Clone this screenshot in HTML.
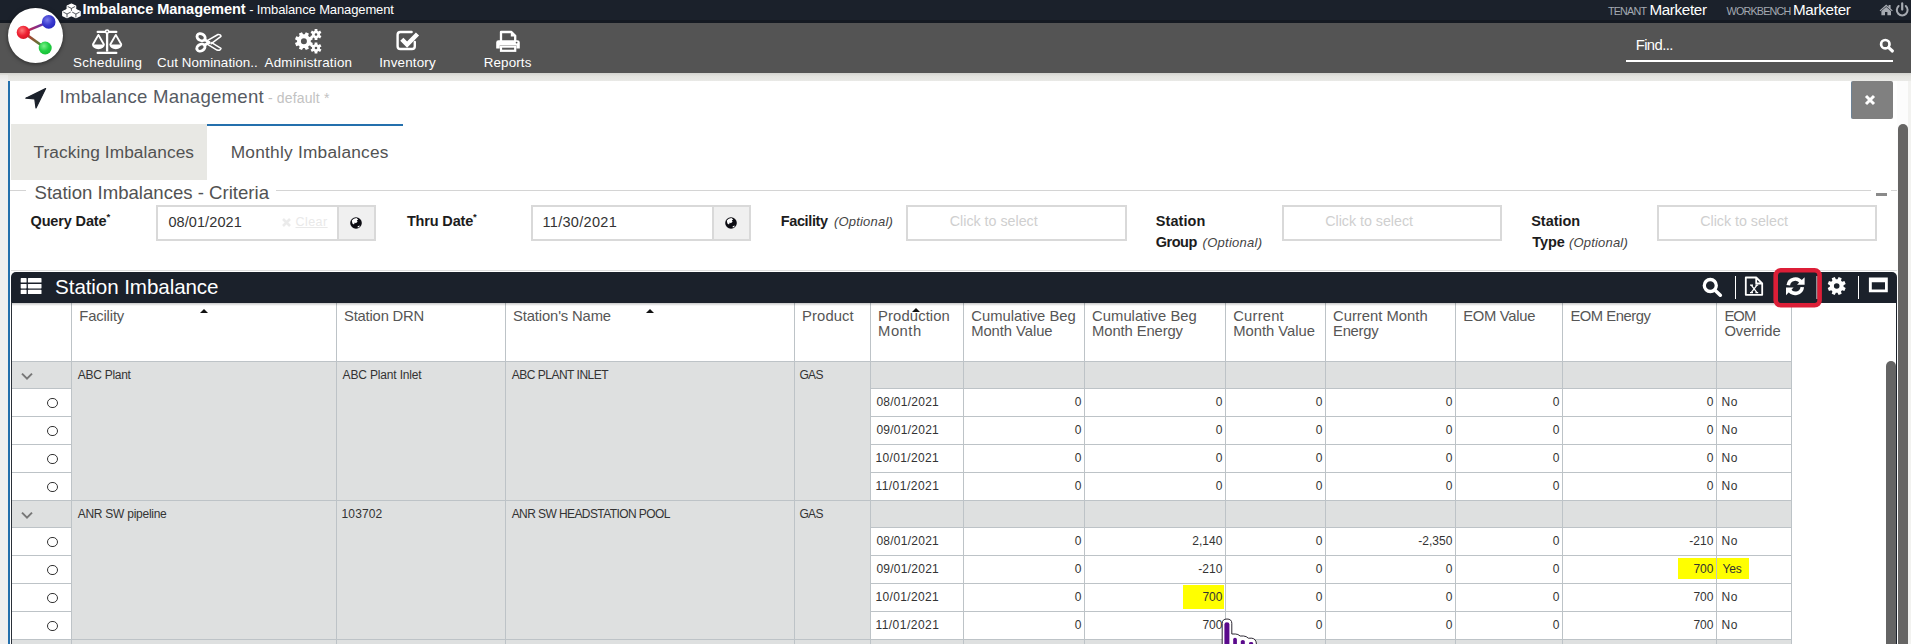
<!DOCTYPE html>
<html lang="en">
<head>
<meta charset="utf-8">
<title>Imbalance Management</title>
<style>
*{box-sizing:border-box;margin:0;padding:0}
html,body{width:1911px;height:644px;overflow:hidden;background:#f0f0f0;font-family:"Liberation Sans",sans-serif;color:#333}
.a{position:absolute}
.t{position:absolute;white-space:nowrap;line-height:1}
.u{text-decoration:underline}
.inp{border:2px solid #d9d9d9;background:#fff}
.btn{border:2px solid #d9d9d9;background:#f0f0f0}
.g{background:#dee0e0}
.c{font-size:12px;letter-spacing:.07px;color:#333}
.hl{height:1px;background:#bdc3c7}
.vl{width:1px;background:#bdc3c7}
.rd{width:10.2px;height:10.2px;border:1.6px solid #333;border-radius:50%}
.ar{width:0;height:0;border-left:4px solid transparent;border-right:4px solid transparent;border-bottom:4.2px solid #111}
</style>
</head>
<body>
<div class="a" style="left:0;top:0;width:1911px;height:22.5px;background:#1b212b"></div>
<div class="a" style="left:0;top:20px;width:1911px;height:2.5px;background:#151a22"></div>
<div class="a" style="left:0;top:22.5px;width:1911px;height:50px;background:#545454"></div>
<div class="a" style="left:0;top:72.5px;width:1911px;height:8.5px;background:linear-gradient(#d3d3cf,#e3e3df 40%,#e9e9e6)"></div>
<div class="a" style="left:0;top:74.5px;width:8px;height:6.5px;background:linear-gradient(#e6e6e4,#f0f0f0)"></div>
<div class="a" style="left:8px;top:81px;width:1889px;height:563px;background:#fff;border-left:2px solid #2470ad"></div>
<div class="a" style="left:8px;top:7.5px;width:55.4px;height:55.4px;border-radius:50%;background:#fff;box-shadow:0 1px 4px rgba(0,0,0,.5)"></div>
<div class="a" style="left:1625.8px;top:60px;width:267.4px;height:2.2px;background:#fff"></div>
<!-- title row -->
<svg class="a" style="left:24px;top:87px" width="24" height="24" viewBox="0 0 24 24"><path d="M21.6 1.6 L1.8 11.2 L10.8 12 L12 21 Z" fill="#1b212b" stroke="#1b212b" stroke-width="1.2" stroke-linejoin="round"/></svg>
<div class="a" style="left:1851px;top:81px;width:42px;height:38px;background:#808080;border-left:1px solid #6d8296;border-radius:2px"></div>
<svg class="a" style="left:1864px;top:94px" width="12" height="12" viewBox="0 0 12 12"><path d="M2 2 L10 10 M10 2 L2 10" stroke="#fff" stroke-width="3"/></svg>
<!-- tabs -->
<div class="a" style="left:11px;top:124px;width:196px;height:55.5px;background:#e8e8e4"></div>
<div class="a" style="left:207px;top:124px;width:196px;height:2px;background:#2470ad"></div>
<!-- fieldset -->
<div class="a" style="left:10px;top:190px;width:16px;height:1px;background:#d4d4d4"></div>
<div class="a" style="left:276px;top:190px;width:1594.5px;height:1px;background:#d4d4d4"></div>
<div class="a" style="left:1890.5px;top:190px;width:6px;height:1px;background:#d4d4d4"></div>
<div class="a" style="left:1875.5px;top:193px;width:11px;height:2.5px;background:#8a8a8a"></div>
<div class="a" style="left:11px;top:270px;width:1886px;height:1px;background:#dedede"></div>
<div class="a inp" style="left:156px;top:205px;width:183px;height:36px"></div>
<div class="a btn" style="left:337px;top:205px;width:39px;height:36px"></div>
<svg class="a" style="left:280.6px;top:216.8px" width="11" height="11" viewBox="0 0 11 11"><path d="M2 2 L9 9 M9 2 L2 9" stroke="#ebebeb" stroke-width="2.6"/></svg>
<div class="a inp" style="left:531px;top:205px;width:183px;height:36px"></div>
<div class="a btn" style="left:712px;top:205px;width:39px;height:36px"></div>
<div class="a inp" style="left:906px;top:205px;width:221px;height:36px"></div>
<div class="a inp" style="left:1282px;top:205px;width:220px;height:36px"></div>
<div class="a inp" style="left:1657px;top:205px;width:220px;height:36px"></div>
<!-- grid title bar -->
<div class="a" style="left:11px;top:272px;width:1886px;height:31px;background:#1b212b;border-radius:5px 5px 0 0"></div>

<!-- grid -->
<div class="a" style="left:11px;top:303px;width:1781px;height:341px;background:#fff"></div>
<div class="a" style="left:1183px;top:585px;width:41px;height:24px;background:#ffff00"></div>
<div class="a" style="left:1678px;top:558px;width:71px;height:21px;background:#ffff00"></div>
<div class="a g" style="left:11px;top:361px;width:1780px;height:27px"></div>
<div class="a g" style="left:71px;top:388px;width:799px;height:112px"></div>
<svg class="a" style="left:21px;top:372px" width="12" height="9" viewBox="0 0 12 9"><path d="M1 1.6 L6 6.6 L11 1.6" fill="none" stroke="#777" stroke-width="2"/></svg>
<div class="a rd" style="left:47.4px;top:397.5px"></div>
<div class="t c" style="right:829.4px;top:395.77px">0</div>
<div class="t c" style="right:688.4px;top:395.77px">0</div>
<div class="t c" style="right:588.4px;top:395.77px">0</div>
<div class="t c" style="right:458.4px;top:395.77px">0</div>
<div class="t c" style="right:351.4px;top:395.77px">0</div>
<div class="t c" style="right:197.4px;top:395.77px">0</div>
<div class="a rd" style="left:47.4px;top:425.5px"></div>
<div class="t c" style="right:829.4px;top:423.77px">0</div>
<div class="t c" style="right:688.4px;top:423.77px">0</div>
<div class="t c" style="right:588.4px;top:423.77px">0</div>
<div class="t c" style="right:458.4px;top:423.77px">0</div>
<div class="t c" style="right:351.4px;top:423.77px">0</div>
<div class="t c" style="right:197.4px;top:423.77px">0</div>
<div class="a rd" style="left:47.4px;top:453.5px"></div>
<div class="t c" style="right:829.4px;top:451.77px">0</div>
<div class="t c" style="right:688.4px;top:451.77px">0</div>
<div class="t c" style="right:588.4px;top:451.77px">0</div>
<div class="t c" style="right:458.4px;top:451.77px">0</div>
<div class="t c" style="right:351.4px;top:451.77px">0</div>
<div class="t c" style="right:197.4px;top:451.77px">0</div>
<div class="a rd" style="left:47.4px;top:481.5px"></div>
<div class="t c" style="right:829.4px;top:479.77px">0</div>
<div class="t c" style="right:688.4px;top:479.77px">0</div>
<div class="t c" style="right:588.4px;top:479.77px">0</div>
<div class="t c" style="right:458.4px;top:479.77px">0</div>
<div class="t c" style="right:351.4px;top:479.77px">0</div>
<div class="t c" style="right:197.4px;top:479.77px">0</div>
<div class="a g" style="left:11px;top:500px;width:1780px;height:27px"></div>
<div class="a g" style="left:71px;top:527px;width:799px;height:112px"></div>
<svg class="a" style="left:21px;top:511px" width="12" height="9" viewBox="0 0 12 9"><path d="M1 1.6 L6 6.6 L11 1.6" fill="none" stroke="#777" stroke-width="2"/></svg>
<div class="a rd" style="left:47.4px;top:536.5px"></div>
<div class="t c" style="right:829.4px;top:534.77px">0</div>
<div class="t c" style="right:688.4px;top:534.77px">2,140</div>
<div class="t c" style="right:588.4px;top:534.77px">0</div>
<div class="t c" style="right:458.4px;top:534.77px">-2,350</div>
<div class="t c" style="right:351.4px;top:534.77px">0</div>
<div class="t c" style="right:197.4px;top:534.77px">-210</div>
<div class="a rd" style="left:47.4px;top:564.5px"></div>
<div class="t c" style="right:829.4px;top:562.77px">0</div>
<div class="t c" style="right:688.4px;top:562.77px">-210</div>
<div class="t c" style="right:588.4px;top:562.77px">0</div>
<div class="t c" style="right:458.4px;top:562.77px">0</div>
<div class="t c" style="right:351.4px;top:562.77px">0</div>
<div class="t c" style="right:197.4px;top:562.77px">700</div>
<div class="a rd" style="left:47.4px;top:592.5px"></div>
<div class="t c" style="right:829.4px;top:590.77px">0</div>
<div class="t c" style="right:688.4px;top:590.77px">700</div>
<div class="t c" style="right:588.4px;top:590.77px">0</div>
<div class="t c" style="right:458.4px;top:590.77px">0</div>
<div class="t c" style="right:351.4px;top:590.77px">0</div>
<div class="t c" style="right:197.4px;top:590.77px">700</div>
<div class="a rd" style="left:47.4px;top:620.5px"></div>
<div class="t c" style="right:829.4px;top:618.77px">0</div>
<div class="t c" style="right:688.4px;top:618.77px">700</div>
<div class="t c" style="right:588.4px;top:618.77px">0</div>
<div class="t c" style="right:458.4px;top:618.77px">0</div>
<div class="t c" style="right:351.4px;top:618.77px">0</div>
<div class="t c" style="right:197.4px;top:618.77px">700</div>
<div class="a g" style="left:11px;top:639px;width:1780px;height:5px"></div>
<div class="a hl" style="left:11px;top:361px;width:1780px"></div>
<div class="a hl" style="left:11px;top:388px;width:60px"></div>
<div class="a hl" style="left:870px;top:388px;width:921px"></div>
<div class="a hl" style="left:11px;top:416px;width:60px"></div>
<div class="a hl" style="left:870px;top:416px;width:921px"></div>
<div class="a hl" style="left:11px;top:444px;width:60px"></div>
<div class="a hl" style="left:870px;top:444px;width:921px"></div>
<div class="a hl" style="left:11px;top:472px;width:60px"></div>
<div class="a hl" style="left:870px;top:472px;width:921px"></div>
<div class="a hl" style="left:11px;top:500px;width:1780px"></div>
<div class="a hl" style="left:11px;top:527px;width:60px"></div>
<div class="a hl" style="left:870px;top:527px;width:921px"></div>
<div class="a hl" style="left:11px;top:555px;width:60px"></div>
<div class="a hl" style="left:870px;top:555px;width:921px"></div>
<div class="a hl" style="left:11px;top:583px;width:60px"></div>
<div class="a hl" style="left:870px;top:583px;width:921px"></div>
<div class="a hl" style="left:11px;top:611px;width:60px"></div>
<div class="a hl" style="left:870px;top:611px;width:921px"></div>
<div class="a hl" style="left:11px;top:639px;width:1780px"></div>
<div class="a vl" style="left:71px;top:303px;height:341px"></div>
<div class="a vl" style="left:336px;top:303px;height:341px"></div>
<div class="a vl" style="left:505px;top:303px;height:341px"></div>
<div class="a vl" style="left:794px;top:303px;height:341px"></div>
<div class="a vl" style="left:870px;top:303px;height:341px"></div>
<div class="a vl" style="left:963px;top:303px;height:341px"></div>
<div class="a vl" style="left:1084px;top:303px;height:341px"></div>
<div class="a vl" style="left:1225px;top:303px;height:341px"></div>
<div class="a vl" style="left:1325px;top:303px;height:341px"></div>
<div class="a vl" style="left:1455px;top:303px;height:341px"></div>
<div class="a vl" style="left:1562px;top:303px;height:341px"></div>
<div class="a vl" style="left:1716px;top:303px;height:341px"></div>
<div class="a vl" style="left:1791px;top:303px;height:341px"></div>
<div class="a" style="left:11px;top:302px;width:1px;height:342px;background:#2a3038"></div>
<div class="a" style="left:12px;top:303px;width:1779px;height:3px;background:linear-gradient(rgba(0,0,0,.22),rgba(0,0,0,0))"></div>
<div class="a ar" style="left:200.1px;top:309.1px"></div>
<div class="a ar" style="left:646px;top:309.1px"></div>
<div class="a ar" style="left:912px;top:308.4px"></div>
<!-- scrollbars -->
<div class="a" style="left:1897px;top:81px;width:14px;height:563px;background:#fcfcfc"></div>
<div class="a" style="left:1908px;top:81px;width:3px;height:563px;background:#f2f2f0"></div>
<div class="a" style="left:1898.1px;top:124px;width:9.9px;height:540px;background:#666564;border-radius:5px"></div>
<div class="a" style="left:1885px;top:303px;width:11px;height:341px;background:#fff"></div>
<div class="a" style="left:1896px;top:303px;width:1px;height:341px;background:#1b212b"></div>
<div class="a" style="left:1886.2px;top:361px;width:9.8px;height:300px;background:#646464;border-radius:5px"></div>

<!-- text -->
<div class="t" style="left:82.5px;top:1.96px;font-size:14.6px;color:#fff;letter-spacing:-0.079px;font-weight:bold">Imbalance Management</div>
<div class="t" style="left:249.2px;top:3.47px;font-size:13px;color:#fff;letter-spacing:-0.129px">- Imbalance Management</div>
<div class="t" style="left:1607.9px;top:5.77px;font-size:10.8px;color:#a3a9b2;letter-spacing:-0.82px">TENANT</div>
<div class="t" style="left:1649.4px;top:2.36px;font-size:15.2px;color:#fff;letter-spacing:-0.329px">Marketer</div>
<div class="t" style="left:1726.5px;top:5.77px;font-size:10.8px;color:#a3a9b2;letter-spacing:-0.812px">WORKBENCH</div>
<div class="t" style="left:1793px;top:2.36px;font-size:15.2px;color:#fff;letter-spacing:-0.286px">Marketer</div>
<div class="t" style="left:73px;top:56.47px;font-size:13.4px;color:#fff;letter-spacing:0.311px">Scheduling</div>
<div class="t" style="left:156.9px;top:56.47px;font-size:13.4px;color:#fff;letter-spacing:0.08px">Cut Nomination..</div>
<div class="t" style="left:264.6px;top:56.47px;font-size:13.4px;color:#fff;letter-spacing:0.2px">Administration</div>
<div class="t" style="left:379.2px;top:56.47px;font-size:13.4px;color:#fff;letter-spacing:0.175px">Inventory</div>
<div class="t" style="left:483.7px;top:56.47px;font-size:13.4px;color:#fff;letter-spacing:0.133px">Reports</div>
<div class="t" style="left:1635.7px;top:38.16px;font-size:14.8px;color:#fff;letter-spacing:-0.583px">Find...</div>
<div class="t" style="left:59.6px;top:88.05px;font-size:18.6px;color:#565b63;letter-spacing:0.242px">Imbalance Management</div>
<div class="t" style="left:267.9px;top:91.17px;font-size:14px;color:#c2c2c2;letter-spacing:0.16px">- default *</div>
<div class="t" style="left:33.5px;top:143.71px;font-size:17.3px;color:#525252;letter-spacing:0.094px">Tracking Imbalances</div>
<div class="t" style="left:230.7px;top:143.71px;font-size:17.3px;color:#525252;letter-spacing:0.241px">Monthly Imbalances</div>
<div class="t" style="left:34.5px;top:184.25px;font-size:18.6px;color:#525252;letter-spacing:-0.004px">Station Imbalances - Criteria</div>
<div class="t" style="left:30.5px;top:213.81px;font-size:14.5px;color:#1c1c1c;letter-spacing:-0.144px;font-weight:bold">Query Date</div>
<div class="t" style="left:106.6px;top:211.73px;font-size:9.5px;color:#1c1c1c;font-weight:bold">*</div>
<div class="t" style="left:168.4px;top:214.51px;font-size:14.5px;color:#333;letter-spacing:0.089px">08/01/2021</div>
<div class="t u" style="left:295.5px;top:215.92px;font-size:12.5px;color:#e9e9e9;letter-spacing:0.45px">Clear</div>
<div class="t" style="left:406.9px;top:213.81px;font-size:14.5px;color:#1c1c1c;letter-spacing:-0.162px;font-weight:bold">Thru Date</div>
<div class="t" style="left:473px;top:211.73px;font-size:9.5px;color:#1c1c1c;font-weight:bold">*</div>
<div class="t" style="left:542.5px;top:214.51px;font-size:14.5px;color:#333;letter-spacing:0.3px">11/30/2021</div>
<div class="t" style="left:780.7px;top:213.81px;font-size:14.5px;color:#1c1c1c;letter-spacing:-0.357px;font-weight:bold">Facility</div>
<div class="t" style="left:833.9px;top:215.07px;font-size:13px;color:#444;letter-spacing:0.211px;font-style:italic">(Optional)</div>
<div class="t" style="left:949.8px;top:213.61px;font-size:14.3px;color:#cfcfcf;letter-spacing:-0.021px">Click to select</div>
<div class="t" style="left:1155.7px;top:213.81px;font-size:14.5px;color:#1c1c1c;letter-spacing:0.1px;font-weight:bold">Station</div>
<div class="t" style="left:1155.7px;top:234.91px;font-size:14.5px;color:#1c1c1c;letter-spacing:-0.45px;font-weight:bold">Group</div>
<div class="t" style="left:1202.6px;top:236.07px;font-size:13px;color:#444;letter-spacing:0.256px;font-style:italic">(Optional)</div>
<div class="t" style="left:1325.3px;top:213.61px;font-size:14.3px;color:#cfcfcf;letter-spacing:-0.036px">Click to select</div>
<div class="t" style="left:1531.2px;top:213.81px;font-size:14.5px;color:#1c1c1c;letter-spacing:-0.017px;font-weight:bold">Station</div>
<div class="t" style="left:1532.2px;top:234.91px;font-size:14.5px;color:#1c1c1c;letter-spacing:-0.067px;font-weight:bold">Type</div>
<div class="t" style="left:1569px;top:236.07px;font-size:13px;color:#444;letter-spacing:0.189px;font-style:italic">(Optional)</div>
<div class="t" style="left:1700.3px;top:213.61px;font-size:14.3px;color:#cfcfcf;letter-spacing:-0.036px">Click to select</div>
<div class="t" style="left:55.1px;top:276.95px;font-size:20.6px;color:#fff;letter-spacing:-0.088px">Station Imbalance</div>
<div class="t" style="left:79.3px;top:308.86px;font-size:14.8px;color:#565656;letter-spacing:-0.157px">Facility</div>
<div class="t" style="left:344px;top:308.86px;font-size:14.8px;color:#565656;letter-spacing:-0.2px">Station DRN</div>
<div class="t" style="left:513.1px;top:308.86px;font-size:14.8px;color:#565656;letter-spacing:-0.146px">Station's Name</div>
<div class="t" style="left:802.1px;top:308.86px;font-size:14.8px;color:#565656;letter-spacing:0.1px">Product</div>
<div class="t" style="left:878.1px;top:308.86px;font-size:14.8px;color:#565656;letter-spacing:0.111px">Production</div>
<div class="t" style="left:878.1px;top:323.86px;font-size:14.8px;color:#565656;letter-spacing:0.475px">Month</div>
<div class="t" style="left:971.2px;top:308.86px;font-size:14.8px;color:#565656;letter-spacing:0.015px">Cumulative Beg</div>
<div class="t" style="left:971.2px;top:323.86px;font-size:14.8px;color:#565656;letter-spacing:-0.06px">Month Value</div>
<div class="t" style="left:1092.1px;top:308.86px;font-size:14.8px;color:#565656;letter-spacing:0.015px">Cumulative Beg</div>
<div class="t" style="left:1092.1px;top:323.86px;font-size:14.8px;color:#565656;letter-spacing:-0.109px">Month Energy</div>
<div class="t" style="left:1233.2px;top:308.86px;font-size:14.8px;color:#565656;letter-spacing:0.2px">Current</div>
<div class="t" style="left:1233.2px;top:323.86px;font-size:14.8px;color:#565656;letter-spacing:-0.03px">Month Value</div>
<div class="t" style="left:1333px;top:308.86px;font-size:14.8px;color:#565656;letter-spacing:0.008px">Current Month</div>
<div class="t" style="left:1333px;top:323.86px;font-size:14.8px;color:#565656;letter-spacing:-0.24px">Energy</div>
<div class="t" style="left:1463.2px;top:308.86px;font-size:14.8px;color:#565656;letter-spacing:-0.287px">EOM Value</div>
<div class="t" style="left:1570.4px;top:308.86px;font-size:14.8px;color:#565656;letter-spacing:-0.478px">EOM Energy</div>
<div class="t" style="left:1724.4px;top:308.86px;font-size:14.8px;color:#565656;letter-spacing:-0.9px">EOM</div>
<div class="t" style="left:1724.4px;top:323.86px;font-size:14.8px;color:#565656;letter-spacing:-0.057px">Override</div>
<div class="t" style="left:77.7px;top:368.57px;font-size:12px;color:#333;letter-spacing:-0.263px">ABC Plant</div>
<div class="t" style="left:342.6px;top:368.57px;font-size:12px;color:#333;letter-spacing:-0.164px">ABC Plant Inlet</div>
<div class="t" style="left:511.7px;top:368.57px;font-size:12px;color:#333;letter-spacing:-0.493px">ABC PLANT INLET</div>
<div class="t" style="left:799.4px;top:368.57px;font-size:12px;color:#333;letter-spacing:-0.6px">GAS</div>
<div class="t" style="left:876.4px;top:395.77px;font-size:12px;color:#333;letter-spacing:0.256px">08/01/2021</div>
<div class="t" style="left:1721.4px;top:395.77px;font-size:12px;color:#333;letter-spacing:0.8px">No</div>
<div class="t" style="left:876.4px;top:423.77px;font-size:12px;color:#333;letter-spacing:0.256px">09/01/2021</div>
<div class="t" style="left:1721.4px;top:423.77px;font-size:12px;color:#333;letter-spacing:0.8px">No</div>
<div class="t" style="left:875.4px;top:451.77px;font-size:12px;color:#333;letter-spacing:0.367px">10/01/2021</div>
<div class="t" style="left:1721.4px;top:451.77px;font-size:12px;color:#333;letter-spacing:0.8px">No</div>
<div class="t" style="left:875.4px;top:479.77px;font-size:12px;color:#333;letter-spacing:0.478px">11/01/2021</div>
<div class="t" style="left:1721.4px;top:479.77px;font-size:12px;color:#333;letter-spacing:0.8px">No</div>
<div class="t" style="left:77.7px;top:507.57px;font-size:12px;color:#333;letter-spacing:-0.257px">ANR SW pipeline</div>
<div class="t" style="left:341.6px;top:507.57px;font-size:12px;color:#333;letter-spacing:0.1px">103702</div>
<div class="t" style="left:511.7px;top:507.57px;font-size:12px;color:#333;letter-spacing:-0.586px">ANR SW HEADSTATION POOL</div>
<div class="t" style="left:799.4px;top:507.57px;font-size:12px;color:#333;letter-spacing:-0.6px">GAS</div>
<div class="t" style="left:876.4px;top:534.77px;font-size:12px;color:#333;letter-spacing:0.256px">08/01/2021</div>
<div class="t" style="left:1721.4px;top:534.77px;font-size:12px;color:#333;letter-spacing:0.8px">No</div>
<div class="t" style="left:876.4px;top:562.77px;font-size:12px;color:#333;letter-spacing:0.256px">09/01/2021</div>
<div class="t" style="left:1722.4px;top:562.77px;font-size:12px;color:#333;letter-spacing:-0.1px">Yes</div>
<div class="t" style="left:875.4px;top:590.77px;font-size:12px;color:#333;letter-spacing:0.367px">10/01/2021</div>
<div class="t" style="left:1721.4px;top:590.77px;font-size:12px;color:#333;letter-spacing:0.8px">No</div>
<div class="t" style="left:875.4px;top:618.77px;font-size:12px;color:#333;letter-spacing:0.478px">11/01/2021</div>
<div class="t" style="left:1721.4px;top:618.77px;font-size:12px;color:#333;letter-spacing:0.8px">No</div>
<!-- icons -->
<svg class="a" style="left:7px;top:7px" width="57" height="57" viewBox="7 7 57 57">
<defs>
<radialGradient id="rgR" cx="40%" cy="35%" r="65%"><stop offset="0" stop-color="#ff7a7a"/><stop offset=".6" stop-color="#ee2233"/><stop offset="1" stop-color="#d81525"/></radialGradient>
<radialGradient id="rgB" cx="40%" cy="35%" r="65%"><stop offset="0" stop-color="#7b7bea"/><stop offset=".6" stop-color="#3a3ad0"/><stop offset="1" stop-color="#2a2ac0"/></radialGradient>
<radialGradient id="rgG" cx="40%" cy="35%" r="65%"><stop offset="0" stop-color="#7af08a"/><stop offset=".6" stop-color="#22d044"/><stop offset="1" stop-color="#18c038"/></radialGradient>
<linearGradient id="lgA" x1="23" y1="32" x2="49" y2="22" gradientUnits="userSpaceOnUse"><stop offset="0" stop-color="#e02030"/><stop offset="1" stop-color="#3a3ad0"/></linearGradient>
<linearGradient id="lgB" x1="23" y1="32" x2="45" y2="48" gradientUnits="userSpaceOnUse"><stop offset="0" stop-color="#e02030"/><stop offset="1" stop-color="#2a9a3a"/></linearGradient>
</defs>
<line x1="23.3" y1="32.4" x2="48.7" y2="21.9" stroke="url(#lgA)" stroke-width="2.6"/>
<line x1="23.3" y1="32.4" x2="45.2" y2="48" stroke="url(#lgB)" stroke-width="2.6"/>
<circle cx="23.3" cy="32.4" r="6.6" fill="url(#rgR)"/>
<circle cx="48.7" cy="21.9" r="6.8" fill="url(#rgB)"/>
<circle cx="45.2" cy="48" r="6.5" fill="url(#rgG)"/>
</svg>
<svg class="a" style="left:61px;top:2px" width="21" height="18" viewBox="61 2 21 18"><path d="M71.4 4.0 L75.7 6.0 L71.4 8.0 L67.10000000000001 6.0 Z M67.10000000000001 6.0 L71.4 8.0 L71.4 12.2 L67.10000000000001 10.2 Z M75.7 6.0 L71.4 8.0 L71.4 12.2 L75.7 10.2 Z" fill="#fff" stroke="#fff" stroke-width="1.1" stroke-linejoin="round"/><path d="M67.7 6.5 L71.4 8.4 L75.10000000000001 6.5 M71.4 8.4 V11.899999999999999" fill="none" stroke="#1b212b" stroke-width=".75"/><path d="M67.0 9.6 L71.3 11.6 L67.0 13.6 L62.7 11.6 Z M62.7 11.6 L67.0 13.6 L67.0 17.8 L62.7 15.8 Z M71.3 11.6 L67.0 13.6 L67.0 17.8 L71.3 15.8 Z" fill="#fff" stroke="#fff" stroke-width="1.1" stroke-linejoin="round"/><path d="M63.300000000000004 12.1 L67.0 14.0 L70.7 12.1 M67.0 14.0 V17.5" fill="none" stroke="#1b212b" stroke-width=".75"/><path d="M75.9 9.6 L80.2 11.6 L75.9 13.6 L71.60000000000001 11.6 Z M71.60000000000001 11.6 L75.9 13.6 L75.9 17.8 L71.60000000000001 15.8 Z M80.2 11.6 L75.9 13.6 L75.9 17.8 L80.2 15.8 Z" fill="#fff" stroke="#fff" stroke-width="1.1" stroke-linejoin="round"/><path d="M72.2 12.1 L75.9 14.0 L79.60000000000001 12.1 M75.9 14.0 V17.5" fill="none" stroke="#1b212b" stroke-width=".75"/></svg>
<svg class="a" style="left:90px;top:28px" width="34" height="28" viewBox="90 28 34 28">
<g fill="none" stroke="#fff" stroke-width="1.9" stroke-linejoin="round" stroke-linecap="round">
<path d="M97.6 31.9 H116.4" stroke-width="2.1"/>
<path d="M107.1 33 V51.6" stroke-width="2.3" stroke-linecap="butt"/>
<path d="M97.6 52.9 H116.4" stroke-width="2.1"/>
<path d="M93 44.3 L98.4 34.9 L103.8 44.3"/>
<path d="M110.4 44.3 L115.8 34.9 L121.2 44.3"/>
</g>
<circle cx="107.1" cy="31.6" r="2.4" fill="#fff"/><circle cx="107.1" cy="31.6" r=".8" fill="#545454"/>
<path d="M92 44.4 H104.8 A6.4 4.8 0 0 1 92 44.4 Z" fill="#fff"/>
<path d="M109.4 44.4 H122.2 A6.4 4.8 0 0 1 109.4 44.4 Z" fill="#fff"/>
</svg>
<svg class="a" style="left:193px;top:30px" width="31" height="25" viewBox="193 30 31 25">
<g fill="none" stroke="#fff" stroke-linejoin="round">
<ellipse cx="201.1" cy="37.2" rx="4.3" ry="3.3" transform="rotate(28 201.1 37.2)" stroke-width="2.8"/>
<ellipse cx="200.9" cy="47.6" rx="4.3" ry="3.3" transform="rotate(-28 200.9 47.6)" stroke-width="2.8"/>
<path d="M206.8 40.8 L218 34.5 Q220.8 34.2 221 36.4 L210.6 44.2" stroke-width="1.5"/>
<path d="M207.2 44.2 L217 50.1 Q220.6 50.8 221 48.4 L211.2 42.3" stroke-width="1.5"/>
<path d="M204.6 39.6 L209 42.4 L204.6 45.2" stroke-width="2.8"/>
</g><circle cx="209" cy="42.4" r="1.5" fill="#fff"/></svg>
<svg class="a" style="left:292px;top:27px" width="32" height="28" viewBox="292 27 32 28"><path fill-rule="evenodd" fill="#fff" d="M310.75 42.01 L312.80 43.12 L311.54 46.14 L309.32 45.47 L308.17 46.62 L308.84 48.84 L305.82 50.10 L304.71 48.05 L303.09 48.05 L301.98 50.10 L298.96 48.84 L299.63 46.62 L298.48 45.47 L296.26 46.14 L295.00 43.12 L297.05 42.01 L297.05 40.39 L295.00 39.28 L296.26 36.26 L298.48 36.93 L299.63 35.78 L298.96 33.56 L301.98 32.30 L303.09 34.35 L304.71 34.35 L305.82 32.30 L308.84 33.56 L308.17 35.78 L309.32 36.93 L311.54 36.26 L312.80 39.28 L310.75 40.39 Z M306.90 41.20 A3.0 3.0 0 1 0 300.90 41.20 A3.0 3.0 0 1 0 306.90 41.20 Z"/><path fill-rule="evenodd" fill="#fff" d="M319.95 35.13 L321.47 36.09 L320.11 38.45 L318.52 37.61 L317.43 38.23 L317.36 40.04 L314.64 40.04 L314.57 38.23 L313.48 37.61 L311.89 38.45 L310.53 36.09 L312.05 35.13 L312.05 33.87 L310.53 32.91 L311.89 30.55 L313.48 31.39 L314.57 30.77 L314.64 28.96 L317.36 28.96 L317.43 30.77 L318.52 31.39 L320.11 30.55 L321.47 32.91 L319.95 33.87 Z M317.30 34.50 A1.3 1.3 0 1 0 314.70 34.50 A1.3 1.3 0 1 0 317.30 34.50 Z"/><path fill-rule="evenodd" fill="#fff" d="M319.95 48.63 L321.47 49.59 L320.11 51.95 L318.52 51.11 L317.43 51.73 L317.36 53.54 L314.64 53.54 L314.57 51.73 L313.48 51.11 L311.89 51.95 L310.53 49.59 L312.05 48.63 L312.05 47.37 L310.53 46.41 L311.89 44.05 L313.48 44.89 L314.57 44.27 L314.64 42.46 L317.36 42.46 L317.43 44.27 L318.52 44.89 L320.11 44.05 L321.47 46.41 L319.95 47.37 Z M317.30 48.00 A1.3 1.3 0 1 0 314.70 48.00 A1.3 1.3 0 1 0 317.30 48.00 Z"/></svg>
<svg class="a" style="left:394px;top:28px" width="28" height="25" viewBox="394 28 28 25">
<path d="M411.6 32 H400.4 Q397.6 32 397.6 34.8 V46.2 Q397.6 49 400.4 49 H412 Q414.8 49 414.8 46.2 V42" fill="none" stroke="#fff" stroke-width="2.4" stroke-linecap="round"/>
<path d="M401.8 39.2 L407.1 44.6 L417.5 34" fill="none" stroke="#fff" stroke-width="4.4" stroke-linejoin="miter"/>
</svg>
<svg class="a" style="left:494px;top:28px" width="28" height="26" viewBox="494 28 28 26">
<path d="M501 41 V32 H511.4 L515.2 35.8 V41" fill="none" stroke="#fff" stroke-width="2.3" stroke-linejoin="round"/>
<path d="M510.8 32 V36.4 H515.2 Z" fill="#fff"/>
<path d="M496.2 48.4 V42.6 Q496.2 40.3 498.5 40.3 H517.5 Q519.8 40.3 519.8 42.6 V48.4 H516.4 V45.2 H499.8 V48.4 Z" fill="#fff"/>
<rect x="501" y="46.6" width="14.2" height="4.2" fill="none" stroke="#fff" stroke-width="2.2"/>
<circle cx="516.6" cy="42.6" r=".9" fill="#545454"/>
</svg>
<svg class="a" style="left:1878px;top:2px" width="33" height="18" viewBox="1878 2 33 18">
<path d="M1879.6 10.4 L1886.2 4.6 L1888.6 6.7 V5 H1890.6 V8.5 L1892.8 10.4 L1892 11.3 L1886.2 6.3 L1880.4 11.3 Z" fill="#a6aab1"/>
<path d="M1881.4 11 L1886.2 6.9 L1891 11 V15.2 H1887.4 V12 H1885 V15.2 H1881.4 Z" fill="#a6aab1"/>
<path d="M1898.6 6 A5.4 5.4 0 1 0 1905.8 6" fill="none" stroke="#a6aab1" stroke-width="2" stroke-linecap="round"/>
<path d="M1902.2 3.4 V9.6" stroke="#a6aab1" stroke-width="2.2" stroke-linecap="round"/>
</svg>
<svg class="a" style="left:1878px;top:36px" width="18" height="18" viewBox="0 0 18 18">
<circle cx="7.3" cy="8.2" r="4.2" fill="none" stroke="#fff" stroke-width="2.7"/>
<path d="M10.7 11.6 L14.4 15" stroke="#fff" stroke-width="3.1" stroke-linecap="round"/>
</svg>
<svg class="a" style="left:349.4px;top:216px" width="14" height="14" viewBox="-7 -7 14 14">
<circle r="5.8" fill="#0c0c12"/>
<path d="M-4.2 -2.6 Q-2.6 -4.6 0.4 -4.9 L2.2 -3.4 L0.8 -2.6 L1.6 -1.2 L-0.2 0.2 L-1.2 -0.6 L-2 1.6 L-3.6 0.4 Z" fill="#fff"/>
<path d="M1.6 3.2 L3.8 2.4 L3.2 4 L1.8 4.6 Z" fill="#fff"/>
</svg>
<svg class="a" style="left:724.4px;top:216px" width="14" height="14" viewBox="-7 -7 14 14">
<circle r="5.8" fill="#0c0c12"/>
<path d="M-4.2 -2.6 Q-2.6 -4.6 0.4 -4.9 L2.2 -3.4 L0.8 -2.6 L1.6 -1.2 L-0.2 0.2 L-1.2 -0.6 L-2 1.6 L-3.6 0.4 Z" fill="#fff"/>
<path d="M1.6 3.2 L3.8 2.4 L3.2 4 L1.8 4.6 Z" fill="#fff"/>
</svg>
<svg class="a" style="left:20px;top:277px" width="22" height="18" viewBox="20 277 22 18"><g fill="#fff">
<rect x="20.7" y="278.1" width="5.9" height="4.4" rx=".6"/><rect x="27.9" y="278.1" width="13.6" height="4.4" rx=".6"/>
<rect x="20.7" y="284" width="5.9" height="4.4" rx=".6"/><rect x="27.9" y="284" width="13.6" height="4.4" rx=".6"/>
<rect x="20.7" y="289.8" width="5.9" height="4.3" rx=".6"/><rect x="27.9" y="289.8" width="13.6" height="4.3" rx=".6"/>
</g></svg>
<svg class="a" style="left:1696px;top:266px" width="200" height="44" viewBox="1696 266 200 44">
<circle cx="1710.3" cy="285.5" r="6" fill="none" stroke="#fff" stroke-width="3.3"/>
<path d="M1715 290.2 L1720.3 295.2" stroke="#fff" stroke-width="3.6" stroke-linecap="round"/>
<rect x="1735" y="276" width="1" height="23" fill="#fff"/>
<path d="M1745.8 277.5 H1756.2 L1762.2 283.5 V294.8 H1745.8 Z M1756.2 277.5 V283.5 H1762.2" fill="none" stroke="#fff" stroke-width="1.8" stroke-linejoin="round"/>
<path d="M1750 285.2 H1753 M1755.4 285.2 H1758.2 M1750 292.6 H1753 M1755.4 292.6 H1758.2 M1751.2 285.2 L1757 292.6 M1757 285.2 L1751.2 292.6" stroke="#fff" stroke-width="1.3" fill="none"/>
<rect x="1816.5" y="276" width="1" height="23" fill="#fff"/>
<rect x="1775.7" y="270.3" width="43.9" height="35" rx="5" fill="none" stroke="#dc1e37" stroke-width="4.6"/>
<path d="M1788.3 285.3 A7 7 0 0 1 1801.4 282.7" fill="none" stroke="#fff" stroke-width="3.6"/>
<path d="M1804.6 277.2 V284.8 H1797 Z" fill="#fff"/>
<path d="M1802.3 287.1 A7 7 0 0 1 1789.2 289.7" fill="none" stroke="#fff" stroke-width="3.6"/>
<path d="M1786 295.2 V287.6 H1793.6 Z" fill="#fff"/>
<path fill-rule="evenodd" fill="#fff" d="M1843.55 286.81 L1845.69 287.94 L1844.43 290.99 L1842.12 290.27 L1840.97 291.42 L1841.69 293.73 L1838.64 294.99 L1837.51 292.85 L1835.89 292.85 L1834.76 294.99 L1831.71 293.73 L1832.43 291.42 L1831.28 290.27 L1828.97 290.99 L1827.71 287.94 L1829.85 286.81 L1829.85 285.19 L1827.71 284.06 L1828.97 281.01 L1831.28 281.73 L1832.43 280.58 L1831.71 278.27 L1834.76 277.01 L1835.89 279.15 L1837.51 279.15 L1838.64 277.01 L1841.69 278.27 L1840.97 280.58 L1842.12 281.73 L1844.43 281.01 L1845.69 284.06 L1843.55 285.19 Z M1839.50 286.00 A2.8 2.8 0 1 0 1833.90 286.00 A2.8 2.8 0 1 0 1839.50 286.00 Z"/>
<rect x="1858" y="276" width="1" height="23" fill="#fff"/>
<path d="M1868.9 277.4 H1887.8 V292.2 H1868.9 Z M1871.8 282.2 V289.6 H1885 V282.2 Z" fill="#fff" fill-rule="evenodd"/>
</svg>
<svg class="a" style="left:1216px;top:612px" width="50" height="32" viewBox="1216 612 50 32">
<path d="M1222.2 650 V623.4 Q1222.2 619 1227 619 Q1231.8 619 1231.8 623.4 V634 H1235.4 Q1238 634 1240.2 636 H1243.6 Q1246.4 636.2 1248.4 638.2 H1251.8 Q1256.2 638.8 1256.4 644 V650 Z" fill="#fff" stroke="#15101c" stroke-width=".9" stroke-linejoin="round"/>
<path d="M1224.4 650 V624.6 Q1224.4 622.2 1226.9 622.2 Q1229.4 622.2 1229.4 624.6 V650 Z" fill="#5a0a8c"/>
<path d="M1233.2 650 V639.4 Q1233.2 637.8 1235 637.8 Q1236.9 637.8 1236.9 639.4 V650 Z" fill="#5a0a8c"/>
<path d="M1240.8 650 V641.6 Q1240.8 640 1242.8 640 Q1244.8 640 1244.8 641.6 V650 Z" fill="#5a0a8c"/>
<path d="M1249 650 V643.4 Q1249 642 1251.1 642 Q1253.2 642 1253.2 643.4 V650 Z" fill="#5a0a8c"/>
</svg>

</body>
</html>
